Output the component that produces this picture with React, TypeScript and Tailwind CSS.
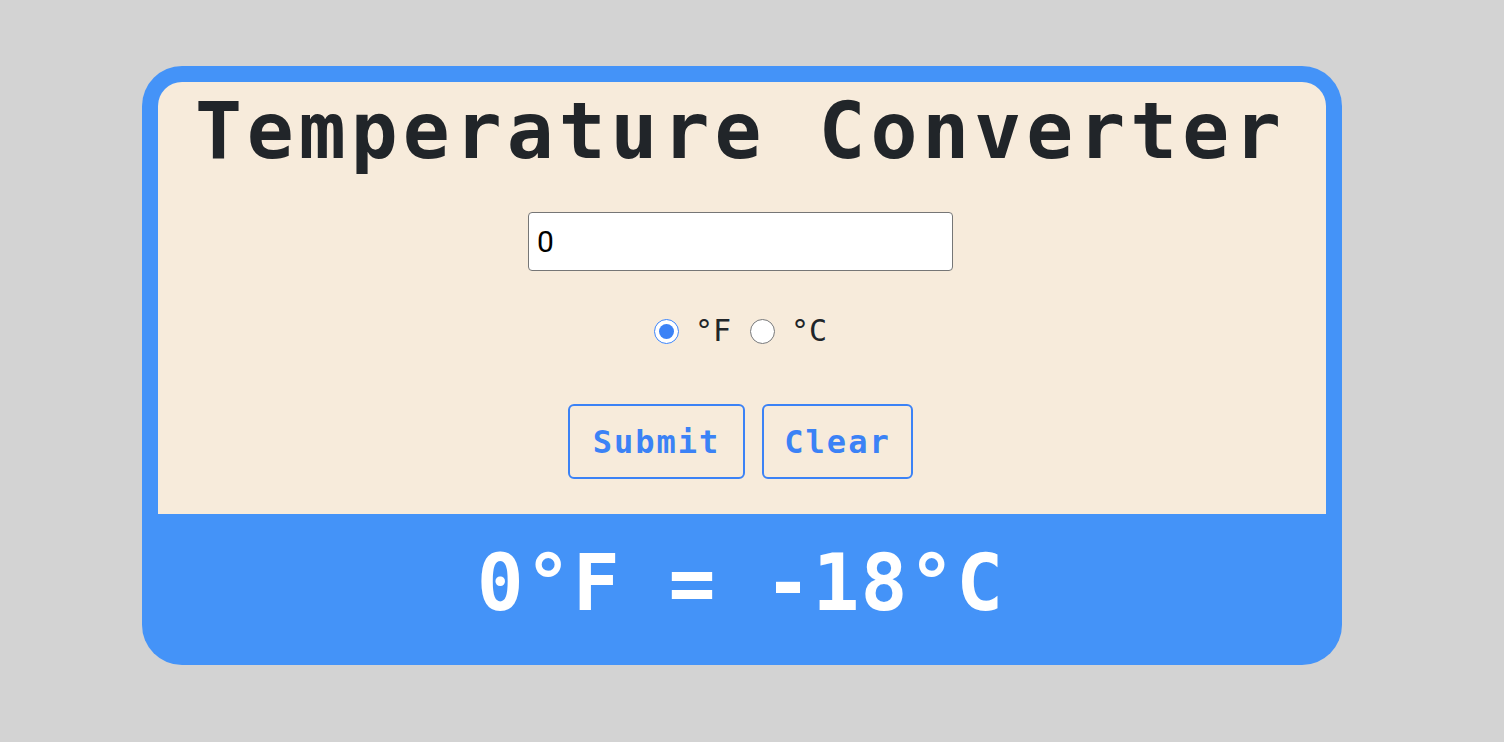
import React, { useState } from "react";

export default function App() {
  const [val, setVal] = useState("0");
  const [unit, setUnit] = useState<"F" | "C">("F");
  const mono = { fontFamily: '"DejaVu Sans Mono", "Liberation Mono", monospace' };
  return (
    <div className="min-h-screen bg-[#d3d3d3] pt-[66px] pl-[142px]">
      <div className="w-[1200px] rounded-[40px] bg-[#4493f8] px-4 pt-4">
        <div className="flex h-[432px] flex-col items-center rounded-t-[24px] bg-[#f7ebdb] pr-[3px]">
          <h1
            className="mt-[10px] text-[78px] leading-[78px] font-bold tracking-[5px] text-[#212529]"
            style={mono}
          >
            Temperature Converter
          </h1>
          <input
            value={val}
            onChange={(e) => setVal(e.target.value)}
            className="mt-[42px] h-[59px] w-[425px] rounded-[4px] border border-[#767676] bg-white px-[8px] text-[30px] text-black outline-none"
            style={{ fontFamily: 'Roboto, "Liberation Sans", sans-serif' }}
          />
          <div
            className="mt-[45px] flex h-[30px] items-center gap-[19px] text-[30px] leading-[30px] text-[#212529]"
            style={mono}
          >
            <label className="flex items-center gap-[16px]">
              <input
                type="radio"
                name="u"
                checked={unit === "F"}
                onChange={() => setUnit("F")}
                className="m-0 h-[25px] w-[25px] accent-[#3b82f6]"
              />
              <span>°F</span>
            </label>
            <label className="flex items-center gap-[16px]">
              <input
                type="radio"
                name="u"
                checked={unit === "C"}
                onChange={() => setUnit("C")}
                className="m-0 h-[25px] w-[25px] accent-[#3b82f6]"
              />
              <span>°C</span>
            </label>
          </div>
          <div className="mt-[58px] flex gap-[17px]">
            <button
              className="h-[75px] w-[177px] rounded-[6px] border-2 border-[#3b82f6] text-[32px] font-bold tracking-[2px] text-[#3b82f6]"
              style={mono}
            >
              Submit
            </button>
            <button
              className="h-[75px] w-[151px] rounded-[6px] border-2 border-[#3b82f6] text-[32px] font-bold tracking-[2px] text-[#3b82f6]"
              style={mono}
            >
              Clear
            </button>
          </div>
        </div>
        <div className="flex h-[151px] justify-center pt-[30px] pr-[3px]">
          <p className="text-[78px] leading-[78px] font-bold tracking-[1px] text-white" style={mono}>
            0°F = -18°C
          </p>
        </div>
      </div>
    </div>
  );
}
